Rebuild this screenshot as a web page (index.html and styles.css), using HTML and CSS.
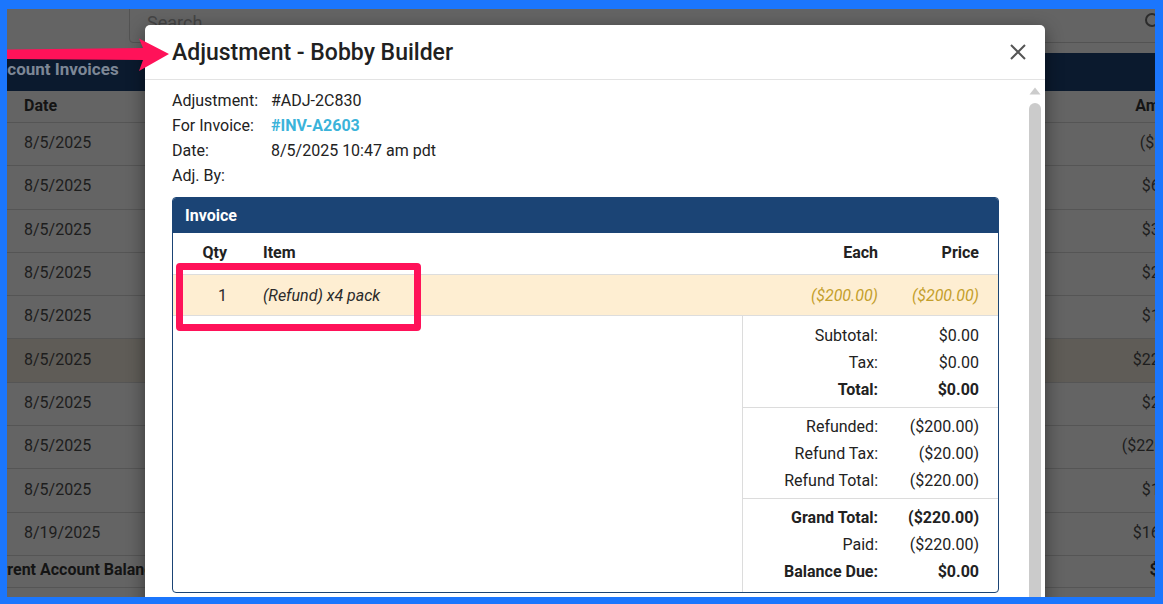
FILE: index.html
```html
<!DOCTYPE html>
<html>
<head>
<meta charset="utf-8">
<title>Adjustment</title>
<link rel="stylesheet" href="styles.css">
</head>
<body>
<div class="screen">
  <div class="page">
    <div class="search">
      <span class="search-ph">Search</span>
      <svg class="search-ic" width="16" height="16" viewBox="0 0 16 16"><circle cx="7" cy="7" r="6" fill="none" stroke="#2b2b2b" stroke-width="2"/></svg>
    </div>
    <div class="panel-head"><span class="panel-title">Account Invoices</span></div>
    <div class="bg-table">
      <div class="bg-row bg-th"><span>Date</span><span class="amt-h">Amount</span></div>
      <div class="bg-row"><span>8/5/2025</span><span>($20.00)</span></div>
      <div class="bg-row"><span>8/5/2025</span><span>$600.00</span></div>
      <div class="bg-row"><span>8/5/2025</span><span>$300.00</span></div>
      <div class="bg-row"><span>8/5/2025</span><span>$200.00</span></div>
      <div class="bg-row"><span>8/5/2025</span><span>$100.00</span></div>
      <div class="bg-row bg-warn"><span>8/5/2025</span><span>$2200.00</span></div>
      <div class="bg-row"><span>8/5/2025</span><span>$200.00</span></div>
      <div class="bg-row"><span>8/5/2025</span><span>($2200.00)</span></div>
      <div class="bg-row"><span>8/5/2025</span><span>$100.00</span></div>
      <div class="bg-row"><span>8/19/2025</span><span>$1600.00</span></div>
      <div class="bg-row bg-total"><span class="total-label">Current Account Balance</span><span>$10.00</span></div>
    </div>
  </div>

  <div class="modal">
    <div class="modal-head">
      <h2 class="modal-title">Adjustment - Bobby Builder</h2>
      <svg class="close" width="16" height="16" viewBox="0 0 16 16"><path d="M1 1L15 15M15 1L1 15" stroke="#555" stroke-width="2" fill="none"/></svg>
    </div>
    <div class="modal-body">
      <div class="modal-content">
        <div class="info">
          <span>Adjustment:</span><span>#ADJ-2C830</span>
          <span>For Invoice:</span><span class="link">#INV-A2603</span>
          <span>Date:</span><span>8/5/2025 10:47 am pdt</span>
          <span>Adj. By:</span><span></span>
        </div>
        <div class="card">
          <div class="card-head">Invoice</div>
          <div class="inv-row inv-th">
            <span class="c-qty">Qty</span><span class="c-item">Item</span><span class="c-each">Each</span><span class="c-price">Price</span>
          </div>
          <div class="inv-row inv-item">
            <span class="c-qty">1</span><span class="c-item it">(Refund) x4 pack</span><span class="c-each money">($200.00)</span><span class="c-price money">($200.00)</span>
          </div>
          <div class="totals">
            <div class="totals-space"></div>
            <div class="totals-block">
              <div class="tgroup first">
                <div class="trow"><span>Subtotal:</span><span>$0.00</span></div>
                <div class="trow"><span>Tax:</span><span>$0.00</span></div>
                <div class="trow strong"><span>Total:</span><span>$0.00</span></div>
              </div>
              <div class="tgroup">
                <div class="trow"><span>Refunded:</span><span>($200.00)</span></div>
                <div class="trow"><span>Refund Tax:</span><span>($20.00)</span></div>
                <div class="trow"><span>Refund Total:</span><span>($220.00)</span></div>
              </div>
              <div class="tgroup last">
                <div class="trow strong"><span>Grand Total:</span><span>($220.00)</span></div>
                <div class="trow"><span>Paid:</span><span>($220.00)</span></div>
                <div class="trow strong"><span>Balance Due:</span><span>$0.00</span></div>
              </div>
            </div>
          </div>
        </div>
      </div>
      <div class="scrollbar">
        <svg class="sb-up" width="12" height="8" viewBox="0 0 12 8"><path d="M6 0.5L11.5 7.5H0.5Z" fill="#cccccc"/></svg>
        <div class="sb-thumb"></div>
      </div>
    </div>
  </div>

  <svg class="arrow" width="180" height="90" viewBox="0 0 180 90">
    <polygon points="0,49.5 143,48 139,38.5 169,54 139,71 143,60 0,59" fill="#ff1259"/>
  </svg>
  <div class="callout"></div>
</div>
</body>
</html>
```

FILE: styles.css
```css
html, body {
  margin: 0;
  padding: 0;
  height: 604px;
  overflow: hidden;
}
body {
  background: #1b76fd;
  padding: 9px 8px 7px 7px;
  box-sizing: border-box;
  font-family: Roboto, "Liberation Sans", Arial, sans-serif;
}
.screen {
  position: relative;
  width: 1148px;
  height: 588px;
  overflow: hidden;
  background: #646464;
}

/* background page (dimmed) */
.page {
  width: 1210px;
}
.search {
  margin: -10px 0 0 122px;
  height: 44px;
  box-sizing: border-box;
  width: 1060px;
  border: 1px solid #535353;
  border-radius: 4px;
  display: flex;
  align-items: center;
  padding: 0 27px 0 17px;
}
.search-ph {
  font-size: 18px;
  color: #454545;
  padding-top: 2px;
}
.search-ic {
  margin-left: auto;
}
.panel-head {
  margin-top: 10px;
  height: 38px;
  box-sizing: border-box;
  padding-bottom: 6px;
  background: #0b1a2e;
  display: flex;
  align-items: center;
}
.panel-title {
  margin-left: -20px;
  font-weight: 700;
  font-size: 17px;
  color: #7d8796;
}
.bg-table {
  padding: 0 17px;
}
.bg-row {
  display: flex;
  justify-content: space-between;
  align-items: center;
  height: 43.3px;
  box-sizing: border-box;
  border-bottom: 1px solid #555555;
  font-size: 16px;
  color: #1d1d1d;
  margin: 0 -17px;
  padding: 0 17px 3px;
}
.bg-th {
  height: 32px;
  font-weight: 700;
  color: #141414;
}
.amt-h {
  padding-right: 8px;
}
.bg-warn {
  background: #5f5c57;
}
.bg-total {
  height: 32px;
  font-weight: 700;
  color: #141414;
}
.total-label {
  margin-left: -42px;
}

/* modal */
.modal {
  position: absolute;
  left: 138px;
  top: 16px;
  width: 900px;
  height: 620px;
  background: #fff;
  border-radius: 5px;
  box-shadow: 0 5px 18px rgba(0, 0, 0, 0.45);
  display: flex;
  flex-direction: column;
  color: #222;
}
.modal-head {
  height: 54px;
  flex: none;
  border-bottom: 1px solid #e3e3e3;
  display: flex;
  align-items: center;
  justify-content: space-between;
  padding: 0 19px 0 27px;
}
.modal-title {
  margin: 0;
  font-size: 23px;
  font-weight: 500;
  color: #212121;
}
.close {
  display: block;
}
.modal-body {
  flex: 1;
  display: flex;
  min-height: 0;
}
.modal-content {
  flex: 1;
  padding: 8px 30px 0 27px;
  font-size: 16px;
}
.info {
  display: grid;
  grid-template-columns: 99px 1fr;
  line-height: 25px;
  color: #222;
}
.link {
  color: #3bb3da;
  font-weight: 700;
}
.card {
  margin-top: 9px;
  border: 1px solid #1b4475;
  border-radius: 4px;
  overflow: hidden;
}
.card-head {
  height: 35px;
  box-sizing: border-box;
  padding-bottom: 1px;
  background: #1b4475;
  color: #fff;
  font-weight: 700;
  display: flex;
  align-items: center;
  padding-left: 12px;
}
.inv-row {
  display: grid;
  grid-template-columns: 72px 1fr 151px 102px;
  align-items: center;
  border-bottom: 1px solid #dddddd;
}
.inv-th {
  height: 42px;
  box-sizing: border-box;
  font-weight: 700;
  padding-bottom: 2px;
}
.inv-item {
  height: 41px;
  box-sizing: border-box;
  background: #feeed2;
  color: #2a2a2a;
}
.it {
  font-style: italic;
}
.c-qty {
  text-align: right;
  padding-right: 18px;
}
.c-item {
  padding-left: 18px;
}
.c-each {
  text-align: right;
  padding-right: 18px;
}
.c-price {
  text-align: right;
  padding-right: 19px;
}
.money {
  color: #c49f2c;
  font-style: italic;
}
.totals {
  display: grid;
  grid-template-columns: 570px 1fr;
}
.totals-space {
  border-right: 1px solid #dcdcdc;
}
.tgroup {
  padding: 5px 0 4px;
  border-bottom: 1px solid #dcdcdc;
}
.tgroup.first {
  padding-top: 6px;
}
.tgroup.last {
  border-bottom: 0;
  padding-bottom: 7px;
}
.trow {
  display: grid;
  grid-template-columns: 1fr 102px;
  line-height: 27px;
}
.trow span {
  text-align: right;
  padding-right: 18px;
}
.trow span + span {
  padding-right: 19px;
}
.strong {
  font-weight: 700;
}
.scrollbar {
  width: 12px;
  margin-right: 4px;
  padding-top: 7px;
  display: flex;
  flex-direction: column;
  align-items: center;
}
.sb-up {
  display: block;
  flex: none;
}
.sb-thumb {
  margin-top: 8px;
  width: 12px;
  flex: 1;
  background: #cbcbcb;
  border-radius: 6px 6px 0 0;
}

/* annotations */
.arrow {
  position: absolute;
  left: -7px;
  top: -9px;
}
.callout {
  position: absolute;
  left: 169px;
  top: 254px;
  width: 245px;
  height: 68px;
  box-sizing: border-box;
  border: 7px solid #ff1259;
  border-radius: 4px;
}
```
